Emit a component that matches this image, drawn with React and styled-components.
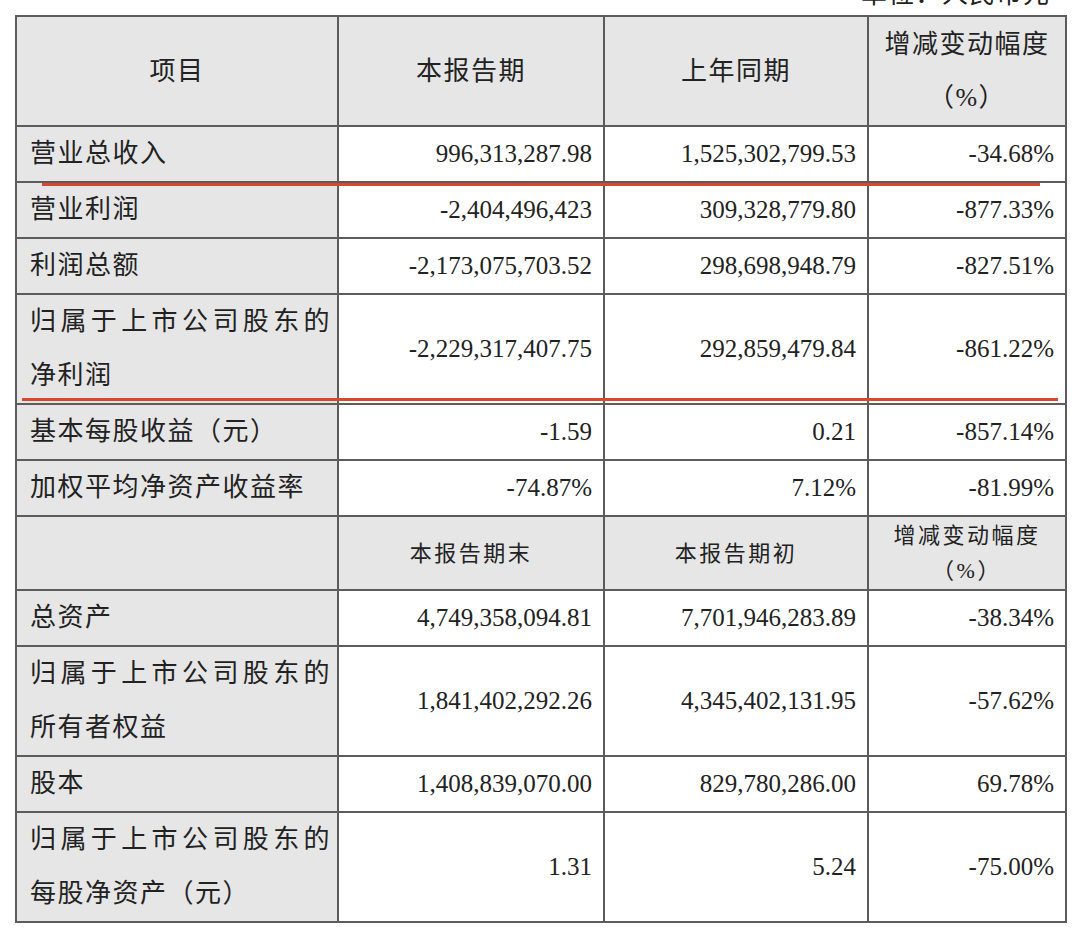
import React from 'react';
import styled, {createGlobalStyle} from 'styled-components';

const GlobalStyle = createGlobalStyle`
  html, body {
    margin: 0;
    padding: 0;
    background: #ffffff;
  }
`

const Page = styled.div`
  width: 1080px;
  height: 932px;
  overflow: hidden;
  background: #ffffff;
  font-family: "Liberation Serif", "Noto Sans CJK SC", serif;
  color: #222222;
`

const Caption = styled.div`
  height: 15px;
  overflow: hidden;
  padding-right: 30px;
  span {
    display: block;
    margin-top: -18px;
    text-align: right;
    font-size: 26px;
    line-height: 26px;
    letter-spacing: 1px;
  }
`

const Frame = styled.div`
  position: relative;
  margin-left: 15px;
  width: 1050px;
`

const Table = styled.table`
  width: 1050px;
  table-layout: fixed;
  border-collapse: collapse;
  td {
    border: 2px solid #5c5c5c;
    padding: 0;
  }
`

const HeadCell = styled.td`
  background: #e6e6e6;
  text-align: center;
  vertical-align: middle;
  font-size: ${(p) => (p.small ? "22px" : "26px")};
  letter-spacing: ${(p) => (p.small ? "2.5px" : "1.5px")};
  line-height: ${(p) => (p.small ? "35px" : "53px")};
  height: ${(p) => (p.small ? "72px" : "108px")};
`

const LabelCell = styled.td`
  background: #e6e6e6;
  padding: 0 0 0 13px !important;
  font-size: 26px;
  line-height: 54px;
  letter-spacing: 1.5px;
  vertical-align: middle;
  span {
    display: block;
    white-space: nowrap;
  }
  span.wide {
    letter-spacing: 4.4px;
  }
`

const NumCell = styled.td`
  background: #ffffff;
  text-align: right;
  padding: 0 11px 0 0 !important;
  font-size: 25px;
  line-height: 54px;
  vertical-align: middle;
  white-space: nowrap;
`

const RedMark = styled.div`
  position: absolute;
  height: 3px;
  background: #d9472f;
  top: ${(p) => p.top}px;
  left: ${(p) => p.left}px;
  width: ${(p) => p.width}px;
`

const topRows = [
  ['营业总收入', '996,313,287.98', '1,525,302,799.53', '-34.68%'],
  ['营业利润', '-2,404,496,423', '309,328,779.80', '-877.33%'],
  ['利润总额', '-2,173,075,703.52', '298,698,948.79', '-827.51%'],
  [['归属于上市公司股东的', '净利润'], '-2,229,317,407.75', '292,859,479.84', '-861.22%'],
  ['基本每股收益（元）', '-1.59', '0.21', '-857.14%'],
  ['加权平均净资产收益率', '-74.87%', '7.12%', '-81.99%'],
]

const bottomRows = [
  ['总资产', '4,749,358,094.81', '7,701,946,283.89', '-38.34%'],
  [['归属于上市公司股东的', '所有者权益'], '1,841,402,292.26', '4,345,402,131.95', '-57.62%'],
  ['股本', '1,408,839,070.00', '829,780,286.00', '69.78%'],
  [['归属于上市公司股东的', '每股净资产（元）'], '1.31', '5.24', '-75.00%'],
]

function Label({value}) {
  if (Array.isArray(value)) {
    return (
      <LabelCell>
        <span className="wide">{value[0]}</span>
        <span>{value[1]}</span>
      </LabelCell>
    )
  }
  return <LabelCell><span>{value}</span></LabelCell>
}

function DataRow({row}) {
  return (
    <tr>
      <Label value={row[0]} />
      <NumCell>{row[1]}</NumCell>
      <NumCell>{row[2]}</NumCell>
      <NumCell>{row[3]}</NumCell>
    </tr>
  )
}

export default function App() {
  return (
    <Page>
      <GlobalStyle />
      <Caption><span>单位：人民币元</span></Caption>
      <Frame>
        <Table>
          <colgroup>
            <col style={{width: 322}} />
            <col style={{width: 266}} />
            <col style={{width: 264}} />
            <col style={{width: 198}} />
          </colgroup>
          <tbody>
            <tr>
              <HeadCell>项目</HeadCell>
              <HeadCell>本报告期</HeadCell>
              <HeadCell>上年同期</HeadCell>
              <HeadCell>增减变动幅度<br />（%）</HeadCell>
            </tr>
            {topRows.map((r, i) => <DataRow key={'t' + i} row={r} />)}
            <tr>
              <HeadCell small />
              <HeadCell small>本报告期末</HeadCell>
              <HeadCell small>本报告期初</HeadCell>
              <HeadCell small>增减变动幅度<br />（%）</HeadCell>
            </tr>
            {bottomRows.map((r, i) => <DataRow key={'b' + i} row={r} />)}
          </tbody>
        </Table>
        <RedMark top={168} left={27} width={998} />
        <RedMark top={383} left={7} width={1036} />
      </Frame>
    </Page>
  )
}
